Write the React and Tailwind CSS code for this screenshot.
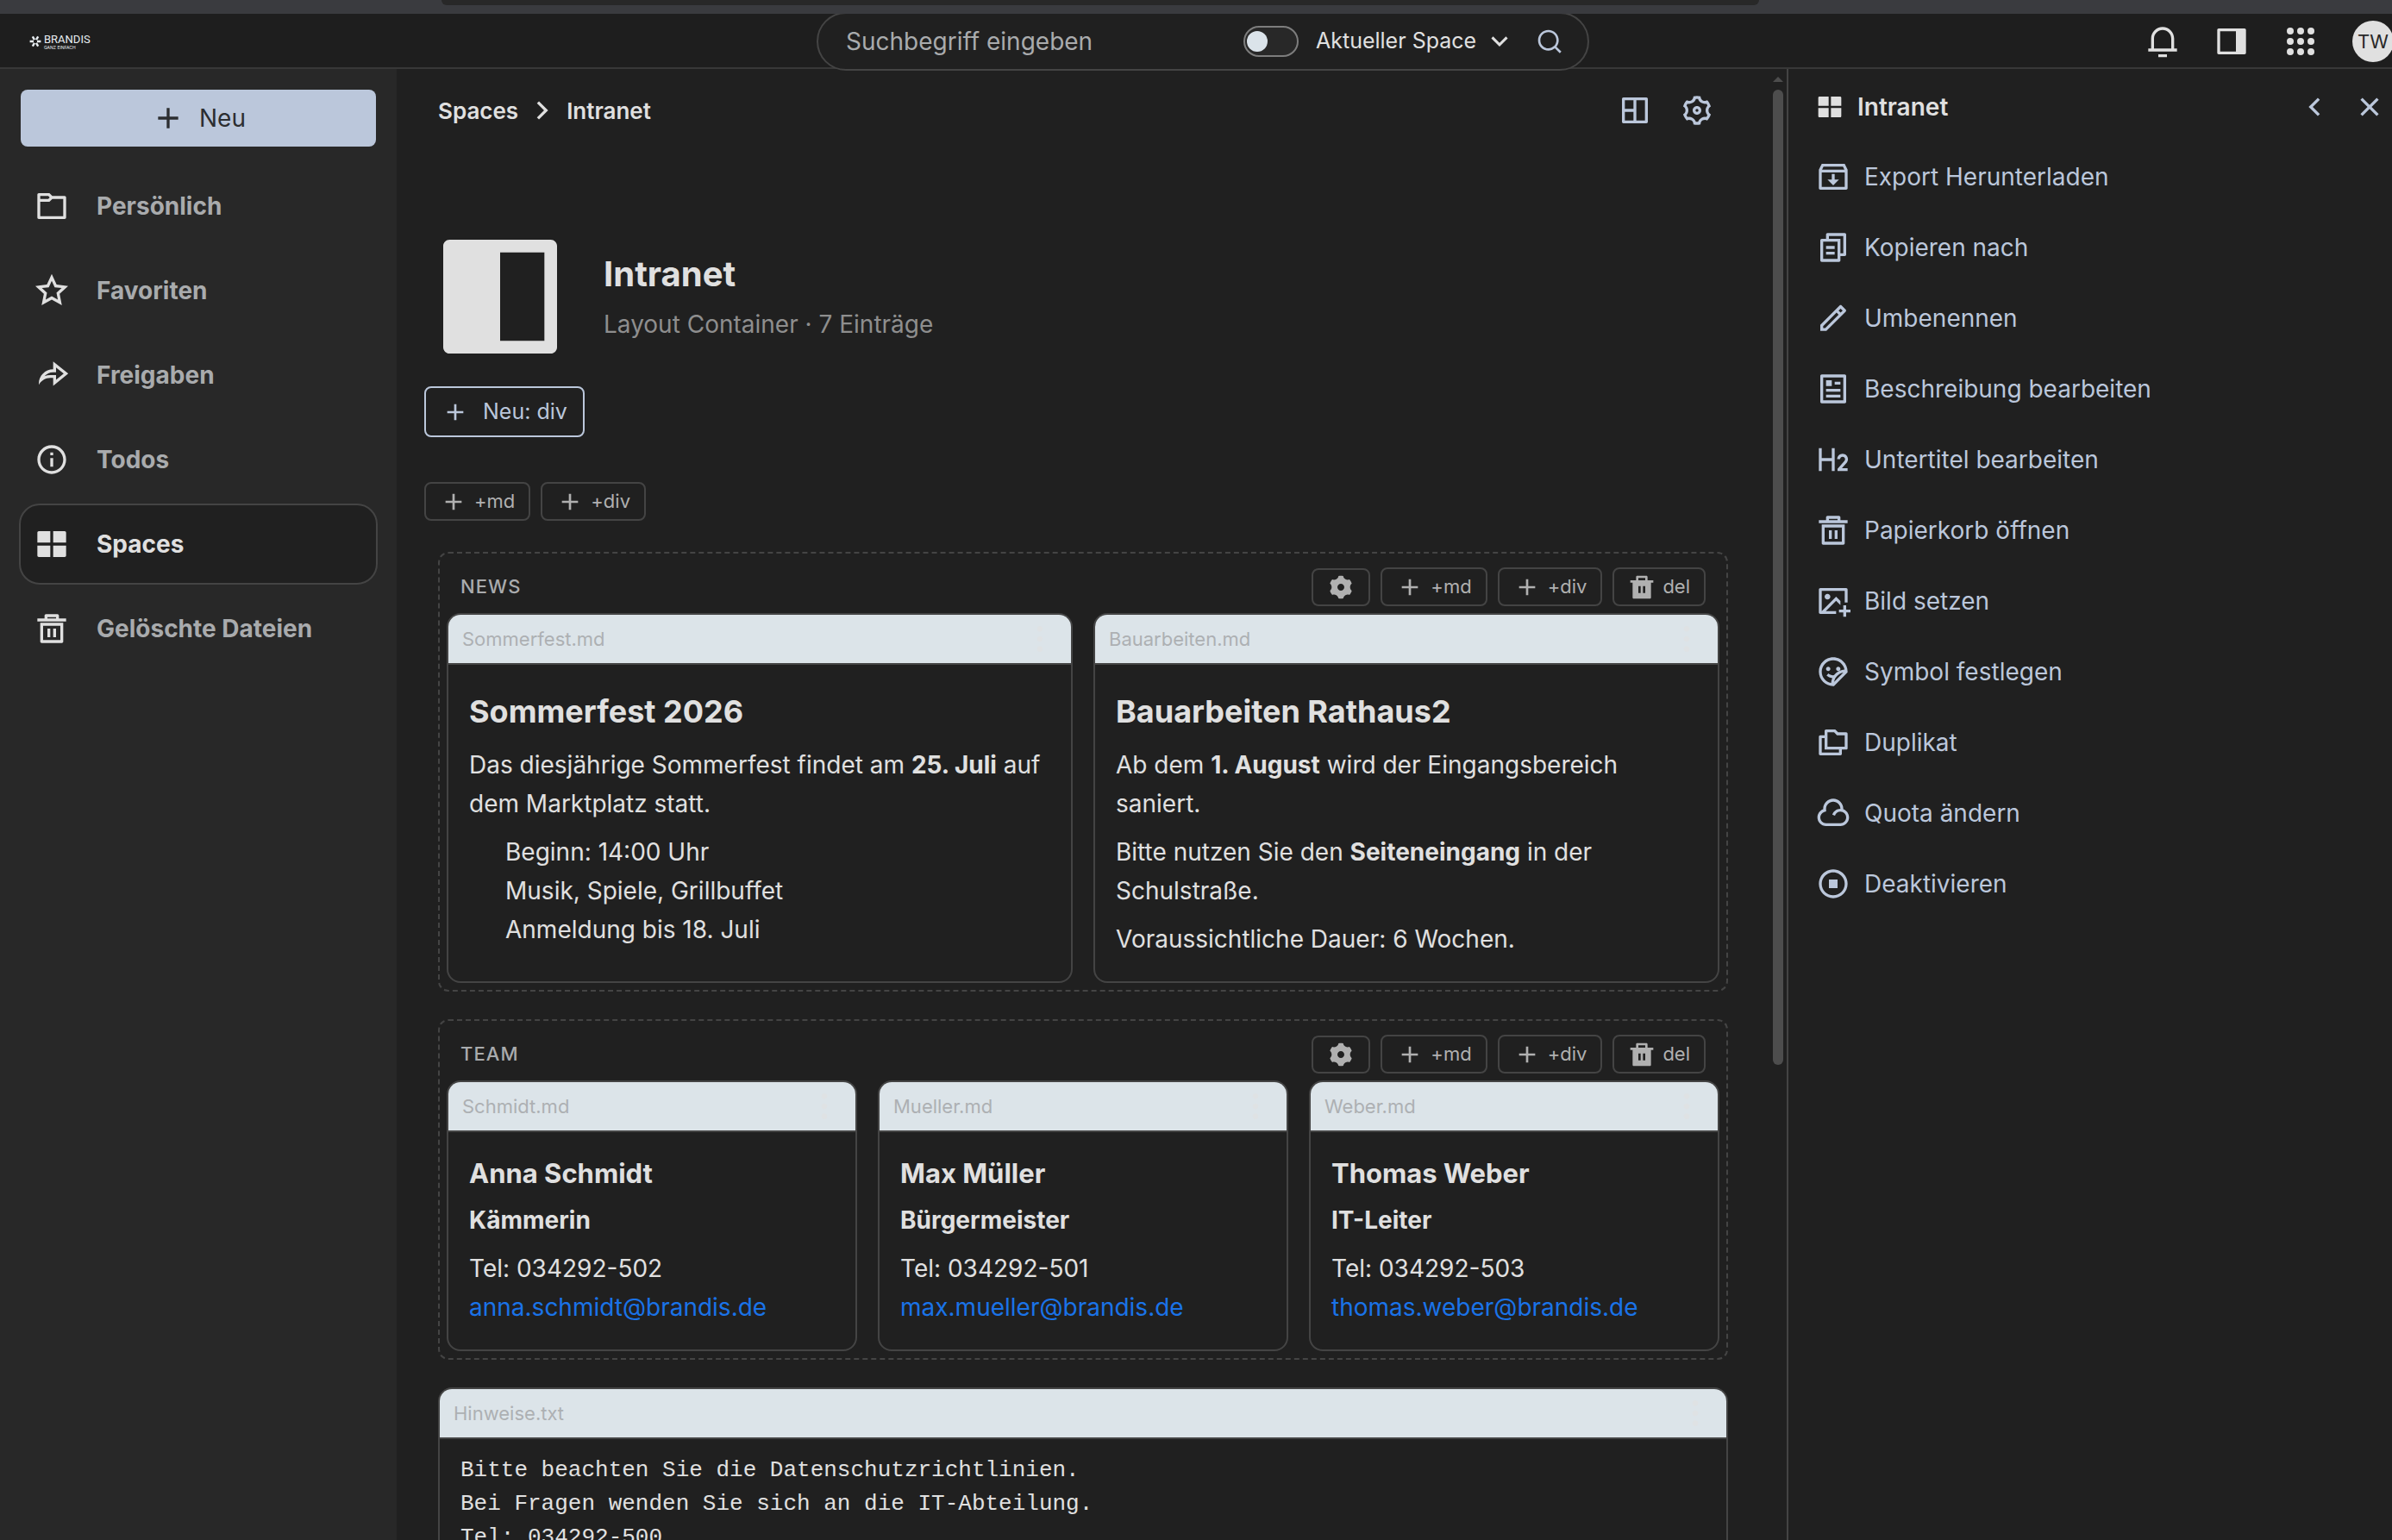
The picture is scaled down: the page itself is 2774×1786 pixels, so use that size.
import React from "react";
import {
  RiAddLine,
  RiArrowDownSLine,
  RiArrowLeftSLine,
  RiArrowRightSLine,
  RiArticleLine,
  RiCloseLine,
  RiCloudLine,
  RiDeleteBin5Line,
  RiDeleteBinFill,
  RiEmojiStickerLine,
  RiFileCopy2Line,
  RiFolder6Line,
  RiFoldersLine,
  RiH2,
  RiImageAddLine,
  RiInboxArchiveLine,
  RiInformationLine,
  RiLayoutColumnFill,
  RiLayoutGridFill,
  RiMore2Fill,
  RiNotification3Line,
  RiPencilLine,
  RiSearchLine,
  RiSettings3Fill,
  RiSettings3Line,
  RiShareForwardLine,
  RiStarLine,
  RiStopCircleLine,
} from "react-icons/ri";

const navItems = [
  { label: "Persönlich", icon: RiFolder6Line },
  { label: "Favoriten", icon: RiStarLine },
  { label: "Freigaben", icon: RiShareForwardLine },
  { label: "Todos", icon: RiInformationLine },
  { label: "Spaces", icon: RiLayoutGridFill, active: true },
  { label: "Gelöschte Dateien", icon: RiDeleteBin5Line },
];

const actions = [
  { label: "Export Herunterladen", icon: RiInboxArchiveLine },
  { label: "Kopieren nach", icon: RiFileCopy2Line },
  { label: "Umbenennen", icon: RiPencilLine },
  { label: "Beschreibung bearbeiten", icon: RiArticleLine },
  { label: "Untertitel bearbeiten", icon: RiH2 },
  { label: "Papierkorb öffnen", icon: RiDeleteBin5Line },
  { label: "Bild setzen", icon: RiImageAddLine },
  { label: "Symbol festlegen", icon: RiEmojiStickerLine },
  { label: "Duplikat", icon: RiFoldersLine },
  { label: "Quota ändern", icon: RiCloudLine },
  { label: "Deaktivieren", icon: RiStopCircleLine },
];

const team = [
  {
    file: "Schmidt.md",
    name: "Anna Schmidt",
    role: "Kämmerin",
    tel: "034292-502",
    mail: "anna.schmidt@brandis.de",
  },
  {
    file: "Mueller.md",
    name: "Max Müller",
    role: "Bürgermeister",
    tel: "034292-501",
    mail: "max.mueller@brandis.de",
  },
  {
    file: "Weber.md",
    name: "Thomas Weber",
    role: "IT-Leiter",
    tel: "034292-503",
    mail: "thomas.weber@brandis.de",
  },
];

function Logo() {
  return (
    <a href="#" className="ml-[18px] flex items-center gap-[3px] text-[#e8eef2]">
      <svg viewBox="0 0 14 14" className="size-[14px]" aria-hidden="true">
        <g stroke="currentColor" strokeWidth="2.4">
          <path d="M9 7H13.4M8 8.8L10.2 12.6M6 8.8L3.8 12.6M5 7H0.6M6 5.2L3.8 1.4M8 5.2L10.2 1.4" />
        </g>
      </svg>
      <span className="flex flex-col">
        <span className="font-['Roboto',sans-serif] text-[13px] leading-[14px]">
          BRANDIS
        </span>
        <span className="text-[5px] leading-[5px]">GANZ EINFACH</span>
      </span>
    </a>
  );
}

function PanelIcon() {
  return (
    <svg viewBox="0 0 24 24" fill="currentColor" className="size-10">
      <path d="M3 3H21C21.55 3 22 3.45 22 4V20C22 20.55 21.55 21 21 21H3C2.45 21 2 20.55 2 20V4C2 3.45 2.45 3 3 3ZM4 5V19H15V5H4Z" />
    </svg>
  );
}

function AppsIcon() {
  return (
    <svg viewBox="0 0 24 24" fill="currentColor" className="size-10">
      {[4.8, 12, 19.2].map((y) =>
        [4.8, 12, 19.2].map((x) => (
          <circle key={`${x}-${y}`} cx={x} cy={y} r="2.4" />
        ))
      )}
    </svg>
  );
}

function LayoutIcon() {
  return (
    <svg viewBox="0 0 24 24" fill="currentColor" className="size-10">
      <path d="M4 3H20C20.55 3 21 3.45 21 4V20C21 20.55 20.55 21 20 21H4C3.45 21 3 20.55 3 20V4C3 3.45 3.45 3 4 3ZM5 5V11H11V5H5ZM5 13V19H11V13H5ZM13 5V19H19V5H13Z" />
    </svg>
  );
}

function Header() {
  return (
    <header className="flex h-16 items-center bg-[#1e1e1e] pl-4 text-[#e0e0e0] shadow-[inset_0_-2px_0_#383838]">
      <div className="flex-1">
        <Logo />
      </div>
      <form className="-my-1 flex h-[68px] w-[896px] items-center rounded-full border-2 border-[#444444] bg-[#202020] pr-7 pl-8">
        <input
          type="text"
          aria-label="Suche"
          placeholder="Suchbegriff eingeben"
          className="min-w-0 flex-1 bg-transparent text-[28px] outline-none placeholder:text-[#a9abad]"
        />
        <input
          type="checkbox"
          aria-label="Nur aktueller Space"
          className="flex h-9 w-16 appearance-none items-center rounded-full border-2 border-[#7d7d7d] bg-[#282828] px-[2px] before:size-6 before:rounded-full before:bg-[#dbe3ea]"
        />
        <div className="relative ml-5 flex items-center">
          <select
            aria-label="Suchbereich"
            className="appearance-none bg-transparent pr-11 text-[25px]"
          >
            <option>Aktueller Space</option>
          </select>
          <RiArrowDownSLine className="pointer-events-none absolute right-0 size-9" />
        </div>
        <button
          type="button"
          aria-label="Suchen"
          className="ml-6 text-[#bbc7db]"
        >
          <RiSearchLine className="size-8" />
        </button>
      </form>
      <div className="flex flex-1 items-center justify-end gap-10">
        <button aria-label="Benachrichtigungen">
          <RiNotification3Line className="size-10" />
        </button>
        <button aria-label="Seitenleiste">
          <PanelIcon />
        </button>
        <button aria-label="Apps">
          <AppsIcon />
        </button>
        <button className="-mr-[2px] flex size-12 items-center justify-center rounded-full bg-[#e0e0e0] text-[22px] text-[#282828]">
          TW
        </button>
      </div>
    </header>
  );
}

function Sidebar() {
  return (
    <aside className="w-[460px] shrink-0 bg-[#282828] px-[22px] pt-6">
      <div className="px-[2px]">
        <button className="flex h-[66px] w-full items-center justify-center gap-4 rounded-lg bg-[#bbc7db] text-[28px] text-[#2c2e31]">
          <RiAddLine className="size-10" />
          Neu
        </button>
      </div>
      <nav className="mt-[22px] flex flex-col gap-1">
        {navItems.map(({ label, icon: Icon, active }) => (
          <a
            key={label}
            href="#"
            className={
              active
                ? "flex h-[94px] items-center gap-8 rounded-3xl border-2 border-[#444444] bg-[#202020] px-4 text-[28px] font-bold text-[#e0e0e0]"
                : "flex h-[94px] items-center gap-8 rounded-3xl border-2 border-transparent px-4 text-[28px] font-bold text-[#a9abad]"
            }
          >
            <Icon className="size-10 text-[#e0e0e0]" />
            {label}
          </a>
        ))}
      </nav>
    </aside>
  );
}

function AddButton({ children }) {
  return (
    <button className="flex h-[45px] items-center gap-2 rounded-lg border-2 border-[#444444] px-4 text-[22px] text-[#b0b0b0]">
      <RiAddLine className="size-8" />
      {children}
    </button>
  );
}

function Section({ title, children }) {
  return (
    <section className="rounded-xl border-2 border-dashed border-[#444444] px-2 pb-2">
      <div className="flex items-center justify-between px-4 pt-4 pb-2">
        <h2 className="text-[22px] font-medium tracking-wider text-[#a9abad]">
          {title}
        </h2>
        <div className="flex items-end gap-3">
          <button
            aria-label="Einstellungen"
            className="flex h-11 items-center rounded-lg border-2 border-[#444444] px-4 text-[#b0b0b0]"
          >
            <RiSettings3Fill className="size-8" />
          </button>
          <AddButton>+md</AddButton>
          <AddButton>+div</AddButton>
          <button className="flex h-[45px] items-center gap-2 rounded-lg border-2 border-[#444444] px-4 text-[22px] text-[#b0b0b0]">
            <RiDeleteBinFill className="size-8" />
            del
          </button>
        </div>
      </div>
      {children}
    </section>
  );
}

function Card({ file, children }) {
  return (
    <article className="overflow-hidden rounded-2xl border-2 border-[#444444]">
      <div className="flex h-[58px] items-center justify-between border-b-2 border-[#444444] bg-[#dce4e9] px-4 text-[22px] text-[#adb0b3]">
        {file}
        <button aria-label={`Menü ${file}`} className="text-[#dfe2e4]">
          <RiMore2Fill className="size-10" />
        </button>
      </div>
      {children}
    </article>
  );
}

function Markdown({ children }) {
  return (
    <div className="flex flex-col gap-[11px] px-6 py-[26px] text-[28px] leading-[45px]">
      {children}
    </div>
  );
}

function News() {
  return (
    <Section title="NEWS">
      <div className="grid grid-cols-2 gap-6">
        <Card file="Sommerfest.md">
          <Markdown>
            <h3 className="text-[36px] leading-[57px] font-bold">
              Sommerfest 2026
            </h3>
            <p>
              Das diesjährige Sommerfest findet am <b>25. Juli</b> auf dem
              Marktplatz statt.
            </p>
            <ul className="pl-[42px]">
              <li>Beginn: 14:00 Uhr</li>
              <li>Musik, Spiele, Grillbuffet</li>
              <li>Anmeldung bis 18. Juli</li>
            </ul>
          </Markdown>
        </Card>
        <Card file="Bauarbeiten.md">
          <Markdown>
            <h3 className="text-[36px] leading-[57px] font-bold">
              Bauarbeiten Rathaus2
            </h3>
            <p>
              Ab dem <b>1. August</b> wird der Eingangsbereich saniert.
            </p>
            <p>
              Bitte nutzen Sie den <b>Seiteneingang</b> in der Schulstraße.
            </p>
            <p>Voraussichtliche Dauer: 6 Wochen.</p>
          </Markdown>
        </Card>
      </div>
    </Section>
  );
}

function Team() {
  return (
    <Section title="TEAM">
      <div className="grid grid-cols-3 gap-6">
        {team.map((person) => (
          <Card key={person.file} file={person.file}>
            <Markdown>
              <h3 className="text-[31px] leading-[43px] font-bold">
                {person.name}
              </h3>
              <p className="font-bold">{person.role}</p>
              <p>
                Tel: {person.tel}
                <br />
                <a href={`mailto:${person.mail}`} className="text-[#1a73e8]">
                  {person.mail}
                </a>
              </p>
            </Markdown>
          </Card>
        ))}
      </div>
    </Section>
  );
}

function Content() {
  return (
    <main className="min-w-0 flex-1 overflow-hidden pr-[52px] pl-8">
      <div className="flex h-24 items-center justify-between px-4">
        <nav className="flex items-center gap-2 text-[26px] font-semibold">
          <a href="#">Spaces</a>
          <RiArrowRightSLine className="size-10" />
          <a href="#">Intranet</a>
        </nav>
        <div className="flex gap-8 text-[#bbc7db]">
          <button aria-label="Layout">
            <LayoutIcon />
          </button>
          <button aria-label="Einstellungen">
            <RiSettings3Line className="size-10" />
          </button>
        </div>
      </div>

      <div className="mt-20 flex items-center gap-8">
        <RiLayoutColumnFill className="size-44" />
        <div>
          <h1 className="text-[40px] leading-[52px] font-bold">Intranet</h1>
          <p className="mt-3 text-[28px] leading-[40px] text-[#8e8e8e]">
            Layout Container · 7 Einträge
          </p>
        </div>
      </div>

      <button className="mt-4 flex h-[59px] items-center gap-4 rounded-lg border-2 border-[#bbc7db] px-[18px] text-[25px] text-[#bbc7db]">
        <RiAddLine className="size-8" />
        Neu: div
      </button>

      <div className="mt-[52px] flex gap-3">
        <AddButton>+md</AddButton>
        <AddButton>+div</AddButton>
      </div>

      <div className="mt-9 flex flex-col gap-8 pl-4">
        <News />
        <Team />
        <Card file="Hinweise.txt">
          <pre className="px-6 py-[17px] font-['Liberation_Mono',monospace] text-[26px] leading-[39px]">
            {`Bitte beachten Sie die Datenschutzrichtlinien.
Bei Fragen wenden Sie sich an die IT-Abteilung.
Tel: 034292-500`}
          </pre>
        </Card>
      </div>
    </main>
  );
}

function ScrollBar() {
  return (
    <div className="mr-1 flex w-3 shrink-0 flex-col pt-[9px]">
      <svg viewBox="0 0 12 6" className="h-[6px] w-3 text-[#4d4d4d]">
        <path d="M6 0L12 6H0Z" fill="currentColor" />
      </svg>
      <div className="mt-[9px] h-2/3 rounded-full bg-[#4d4d4d]" />
    </div>
  );
}

function DetailsPanel() {
  return (
    <aside className="w-[702px] shrink-0 border-l-2 border-[#444444] pt-1 pl-8">
      <div className="flex h-20 items-center pr-[6px]">
        <RiLayoutGridFill className="size-8" />
        <h2 className="ml-4 flex-1 text-[28px] font-semibold">Intranet</h2>
        <div className="flex gap-6 text-[#bbc7db]">
          <button aria-label="Zurück">
            <RiArrowLeftSLine className="size-10" />
          </button>
          <button aria-label="Schließen">
            <RiCloseLine className="size-10" />
          </button>
        </div>
      </div>
      <ul>
        {actions.map(({ label, icon: Icon }) => (
          <li key={label}>
            <button className="flex h-[82px] items-center gap-4 text-[28px] text-[#bbc7db]">
              <Icon className="size-10" />
              {label}
            </button>
          </li>
        ))}
      </ul>
    </aside>
  );
}

export default function App() {
  return (
    <div className="flex h-screen flex-col overflow-hidden bg-[#202020] font-['Inter',sans-serif] text-[#e0e0e0]">
      <div className="z-10 h-4 shrink-0 bg-[#3a3b3f] pr-[734px] pl-[512px]">
        <div className="h-[6px] rounded-b-lg bg-[#282828]" />
      </div>
      <Header />
      <div className="flex min-h-0 flex-1">
        <Sidebar />
        <Content />
        <ScrollBar />
        <DetailsPanel />
      </div>
    </div>
  );
}
